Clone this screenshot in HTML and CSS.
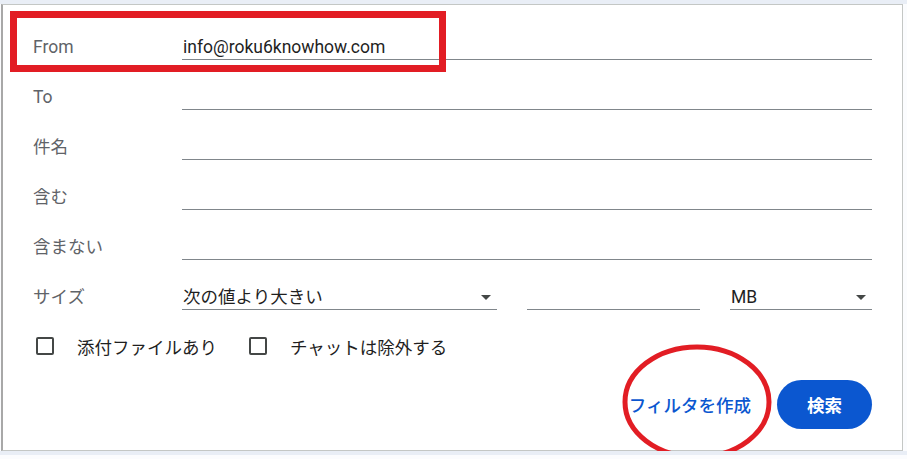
FILE: index.html
```html
<!DOCTYPE html>
<html>
<head>
  <title>検索オプション</title>
  <link rel="stylesheet" href="styles.css">
</head>
<body>
  <div class="dialog">
    <!-- Поля поиска -->
    <div class="row">
      <span class="label">From</span>
      <div class="field"><span class="value">info@roku6knowhow.com</span></div>
    </div>
    <div class="row">
      <span class="label">To</span>
      <div class="field"></div>
    </div>
    <div class="row">
      <span class="label">件名</span>
      <div class="field"></div>
    </div>
    <div class="row">
      <span class="label">含む</span>
      <div class="field"></div>
    </div>
    <div class="row">
      <span class="label">含まない</span>
      <div class="field"></div>
    </div>
    <div class="row">
      <span class="label">サイズ</span>
      <div class="size-grid">
        <div class="field select"><span class="value">次の値より大きい</span><span class="arrow"></span></div>
        <div class="field"></div>
        <div class="field select"><span class="value">MB</span><span class="arrow"></span></div>
      </div>
    </div>

    <div class="checks">
      <label class="check"><span class="box"></span>添付ファイルあり</label>
      <label class="check"><span class="box"></span>チャットは除外する</label>
    </div>

    <div class="actions">
      <button class="text-button">フィルタを作成</button>
      <button class="search-button">検索</button>
    </div>

    <!-- Пометки красным -->
    <div class="mark-rect"></div>
    <svg class="mark-ellipse" width="152" height="118" viewBox="0 0 152 118">
      <ellipse cx="76" cy="59" rx="72" ry="55" fill="none" stroke="#e21d24" stroke-width="5"/>
    </svg>
  </div>
</body>
</html>
```

FILE: styles.css
```css
/* Общие стили */
body {
  margin: 0;
  background: linear-gradient(#e9eef6 0, #e9eef6 4px, #fbfcfe 4px);
  font-family: Roboto, "Noto Sans CJK JP", sans-serif;
  color: #1f1f1f;
}

.dialog {
  position: relative;
  margin: 4px 4px 0 1px;
  height: 447px;
  box-sizing: border-box;
  background-color: #fff;
  border: 1px solid #c4c7c5;
  border-left: 2px solid #a8a8a8;
  padding: 5px 30px 0 30px;
}

/* Строки формы */
.row {
  display: flex;
  align-items: flex-end;
  height: 50px;
}

.label {
  width: 149px;
  flex-shrink: 0;
  font-size: 17.5px;
  line-height: 20px;
  color: #5f6368;
  padding-bottom: 3px;
}

.field {
  flex: 1;
  height: 100%;
  box-sizing: border-box;
  border-bottom: 1px solid #80868b;
  display: flex;
  align-items: flex-end;
  padding-bottom: 2px;
  font-size: 17.5px;
  line-height: 20px;
}

.value {
  padding-left: 1px;
}

.size-grid {
  flex: 1;
  height: 100%;
  display: grid;
  grid-template-columns: 315px 173px 1fr;
  column-gap: 30px;
}

.select {
  justify-content: space-between;
}

.arrow {
  width: 0;
  height: 0;
  border-left: 5px solid transparent;
  border-right: 5px solid transparent;
  border-top: 5px solid #444746;
  margin: 0 6px 7px 0;
}

/* Чекбоксы */
.checks {
  display: flex;
  align-items: center;
  height: 24px;
  margin-top: 24px;
  padding-left: 3px;
}

.check {
  display: flex;
  align-items: center;
  font-size: 17.5px;
  color: #1f1f1f;
  margin-right: 32px;
}

.box {
  width: 14px;
  height: 14px;
  border: 2px solid #444746;
  border-radius: 2px;
  margin-right: 23px;
}

/* Кнопки */
.actions {
  display: flex;
  justify-content: flex-end;
  align-items: center;
  margin-top: 22px;
  gap: 14px;
}

.text-button {
  background: none;
  border: none;
  padding: 0 12px;
  height: 49px;
  font-family: inherit;
  font-size: 17.5px;
  font-weight: 500;
  color: #0b57d0;
}

.search-button {
  background-color: #0b57d0;
  border: none;
  border-radius: 25px;
  width: 95px;
  height: 49px;
  font-family: inherit;
  font-size: 17.5px;
  font-weight: 700;
  color: #fff;
}

/* Красные пометки */
.mark-rect {
  position: absolute;
  left: 7px;
  top: 6px;
  width: 422px;
  height: 47px;
  border: 7px solid #e21d24;
}

.mark-ellipse {
  position: absolute;
  left: 618px;
  top: 338px;
}
```
